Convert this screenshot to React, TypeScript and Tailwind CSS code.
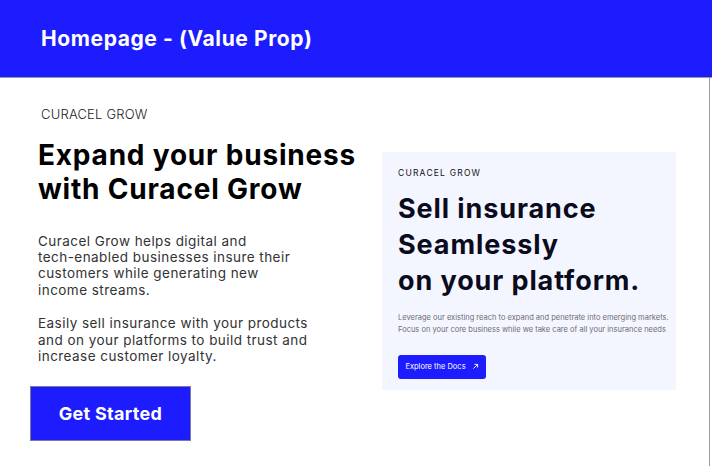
const App = () => {
    return (
        <div className="w-[712px] h-[466px] bg-white overflow-hidden font-['Inter',sans-serif]">
            <header className="h-[78px] bg-[#1c1cff] border-b border-[#9a9a9a] flex items-center pl-[41px]">
                <h1 className="text-white text-[21px] font-bold tracking-[0.6px]">Homepage - (Value Prop)</h1>
            </header>

            <div className="h-[388px] w-[710px] border-r border-[#9a9a9a] flex">
                <div className="w-[344px] flex flex-col pl-[38px] whitespace-nowrap">
                    <p className="mt-[27px] ml-[3px] text-[13px] text-[#222] uppercase font-light tracking-[0.2px]">Curacel Grow</p>

                    <h2 className="mt-[13px] text-[28px] leading-[34px] font-bold text-black tracking-[0.8px]">Expand your business <br />with Curacel Grow</h2>

                    <p className="mt-[27px] text-[13.5px] leading-[16.4px] text-[#333] tracking-[0.45px]">Curacel Grow helps digital and <br />tech-enabled businesses insure their <br />customers while generating new <br />income streams.</p>
                    <p className="mt-[17px] text-[13.5px] leading-[16.4px] text-[#333] tracking-[0.45px]">Easily sell insurance with your products <br />and on your platforms to build trust and <br />increase customer loyalty.</p>

                    <button className="mt-[22px] -ml-[8px] w-[161px] h-[55px] bg-[#1c1cff] border border-[#7a7a9a] text-white text-[18px] font-bold tracking-[0.3px]">Get Started</button>
                </div>

                <div className="pl-[38px] pt-[74px]">
                    <div className="w-[294px] h-[238px] bg-[#f4f6ff] pl-[16px] pt-[15px] whitespace-nowrap">
                        <p className="text-[8.5px] tracking-[1.2px] text-[#111] uppercase">Curacel Grow</p>
                        <h3 className="mt-[11px] text-[27px] leading-[36px] font-bold text-[#0b0b1e] tracking-[0.9px]">Sell insurance <br />Seamlessly <br />on your platform.</h3>
                        <p className="mt-[13px] text-[7.5px] leading-[12px] text-[#6b6b78]">Leverage our existing reach to expand and penetrate into emerging markets. <br />Focus on your core business while we take care of all your insurance needs</p>
                        <button className="mt-[19px] w-[88px] h-[24px] rounded-[3px] bg-[#1c1cff] text-white text-[7.5px] flex items-center justify-center gap-[6px]">
                            Explore the Docs
                            <svg width="7" height="7" viewBox="0 0 10 10" fill="none" stroke="white" strokeWidth="1.3">
                                <path d="M2 8L8 2M3.5 2H8V6.5" />
                            </svg>
                        </button>
                    </div>
                </div>
            </div>
        </div>
    )
}

export default App
